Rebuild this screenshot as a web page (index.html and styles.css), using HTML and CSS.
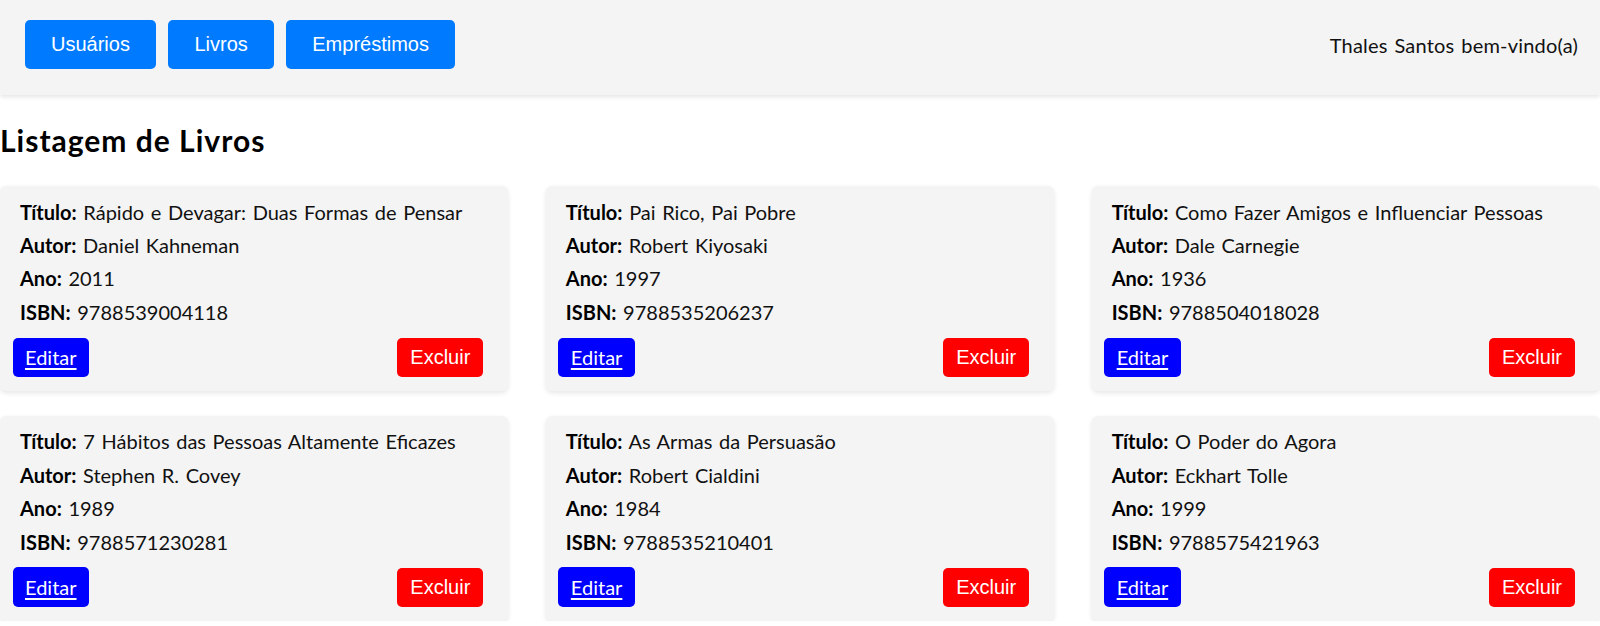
FILE: index.html
```html
<!DOCTYPE html>
<html lang="pt-BR">
<head>
<meta charset="utf-8">
<title>Listagem de Livros</title>
<link rel="stylesheet" href="styles.css">
</head>
<body>
<header class="topbar">
  <nav class="nav">
    <a class="nav-btn" href="#">Usuários</a>
    <a class="nav-btn" href="#">Livros</a>
    <a class="nav-btn" href="#">Empréstimos</a>
  </nav>
  <span class="welcome">Thales Santos bem-vindo(a)</span>
</header>
<main class="content">
  <h2 class="page-title">Listagem de Livros</h2>
  <div class="grid">
    <div class="card">
      <p><strong>Título:</strong> Rápido e Devagar: Duas Formas de Pensar</p>
      <p><strong>Autor:</strong> Daniel Kahneman</p>
      <p><strong>Ano:</strong> 2011</p>
      <p><strong>ISBN:</strong> 9788539004118</p>
      <div class="actions"><a class="btn-edit" href="#">Editar</a><button class="btn-delete">Excluir</button></div>
    </div>
    <div class="card">
      <p><strong>Título:</strong> Pai Rico, Pai Pobre</p>
      <p><strong>Autor:</strong> Robert Kiyosaki</p>
      <p><strong>Ano:</strong> 1997</p>
      <p><strong>ISBN:</strong> 9788535206237</p>
      <div class="actions"><a class="btn-edit" href="#">Editar</a><button class="btn-delete">Excluir</button></div>
    </div>
    <div class="card">
      <p><strong>Título:</strong> Como Fazer Amigos e Influenciar Pessoas</p>
      <p><strong>Autor:</strong> Dale Carnegie</p>
      <p><strong>Ano:</strong> 1936</p>
      <p><strong>ISBN:</strong> 9788504018028</p>
      <div class="actions"><a class="btn-edit" href="#">Editar</a><button class="btn-delete">Excluir</button></div>
    </div>
    <div class="card">
      <p><strong>Título:</strong> 7 Hábitos das Pessoas Altamente Eficazes</p>
      <p><strong>Autor:</strong> Stephen R. Covey</p>
      <p><strong>Ano:</strong> 1989</p>
      <p><strong>ISBN:</strong> 9788571230281</p>
      <div class="actions"><a class="btn-edit" href="#">Editar</a><button class="btn-delete">Excluir</button></div>
    </div>
    <div class="card">
      <p><strong>Título:</strong> As Armas da Persuasão</p>
      <p><strong>Autor:</strong> Robert Cialdini</p>
      <p><strong>Ano:</strong> 1984</p>
      <p><strong>ISBN:</strong> 9788535210401</p>
      <div class="actions"><a class="btn-edit" href="#">Editar</a><button class="btn-delete">Excluir</button></div>
    </div>
    <div class="card">
      <p><strong>Título:</strong> O Poder do Agora</p>
      <p><strong>Autor:</strong> Eckhart Tolle</p>
      <p><strong>Ano:</strong> 1999</p>
      <p><strong>ISBN:</strong> 9788575421963</p>
      <div class="actions"><a class="btn-edit" href="#">Editar</a><button class="btn-delete">Excluir</button></div>
    </div>
  </div>
</main>
</body>
</html>
```

FILE: styles.css
```css
* { box-sizing: border-box; }

html, body {
  margin: 0;
  padding: 0;
  background: #ffffff;
}

body {
  font-family: "Segoe UI", Lato, "Noto Sans", sans-serif;
  color: #000;
}

.topbar {
  display: flex;
  justify-content: space-between;
  align-items: center;
  background: #f4f4f4;
  padding: 20px 22px 26px 25px;
  box-shadow: 0 2px 4px rgba(0, 0, 0, 0.1);
}

.nav {
  display: flex;
  gap: 12.5px;
}

.nav-btn {
  display: block;
  background: #007bff;
  color: #fff;
  text-decoration: none;
  font-family: "Liberation Sans", Arial, sans-serif;
  font-size: 20px;
  line-height: 23px;
  padding: 13px 26px;
  border-radius: 5px;
}

.welcome {
  font-size: 20px;
  line-height: 26px;
  color: #111;
  word-spacing: 1.5px;
  letter-spacing: 0.2px;
}

.content {
  padding: 0;
}

.page-title {
  margin: 25px 0 26px;
  font-size: 30px;
  line-height: 40px;
  font-weight: 700;
  letter-spacing: 1px;
}

.grid {
  display: grid;
  grid-template-columns: repeat(3, 1fr);
  column-gap: 37.5px;
  row-gap: 25px;
}

.card {
  background: #f4f4f4;
  border-radius: 6px;
  box-shadow: 0 2px 5px rgba(0, 0, 0, 0.1);
  padding: 12.5px 25px 13.5px 12.5px;
}

.card p {
  margin: 0 0 6.25px;
  padding-left: 7.5px;
  font-size: 20px;
  line-height: 27.2px;
  word-spacing: 1.5px;
  color: #111;
}

.card p strong {
  color: #000;
  font-weight: 700;
}

.actions {
  display: flex;
  justify-content: space-between;
  align-items: center;
  margin-top: 11.5px;
}

.btn-edit {
  display: block;
  background: #0000ff;
  color: #fff;
  font-size: 20px;
  line-height: 26.6px;
  padding: 6.6px 12.5px;
  border-radius: 5px;
  text-decoration: underline;
  text-underline-offset: 3px;
}

.btn-delete {
  background: #ff0000;
  color: #fff;
  border: none;
  font-family: "Liberation Sans", Arial, sans-serif;
  font-size: 20px;
  line-height: 23px;
  padding: 8.3px 13px;
  border-radius: 5px;
  cursor: pointer;
}
```
